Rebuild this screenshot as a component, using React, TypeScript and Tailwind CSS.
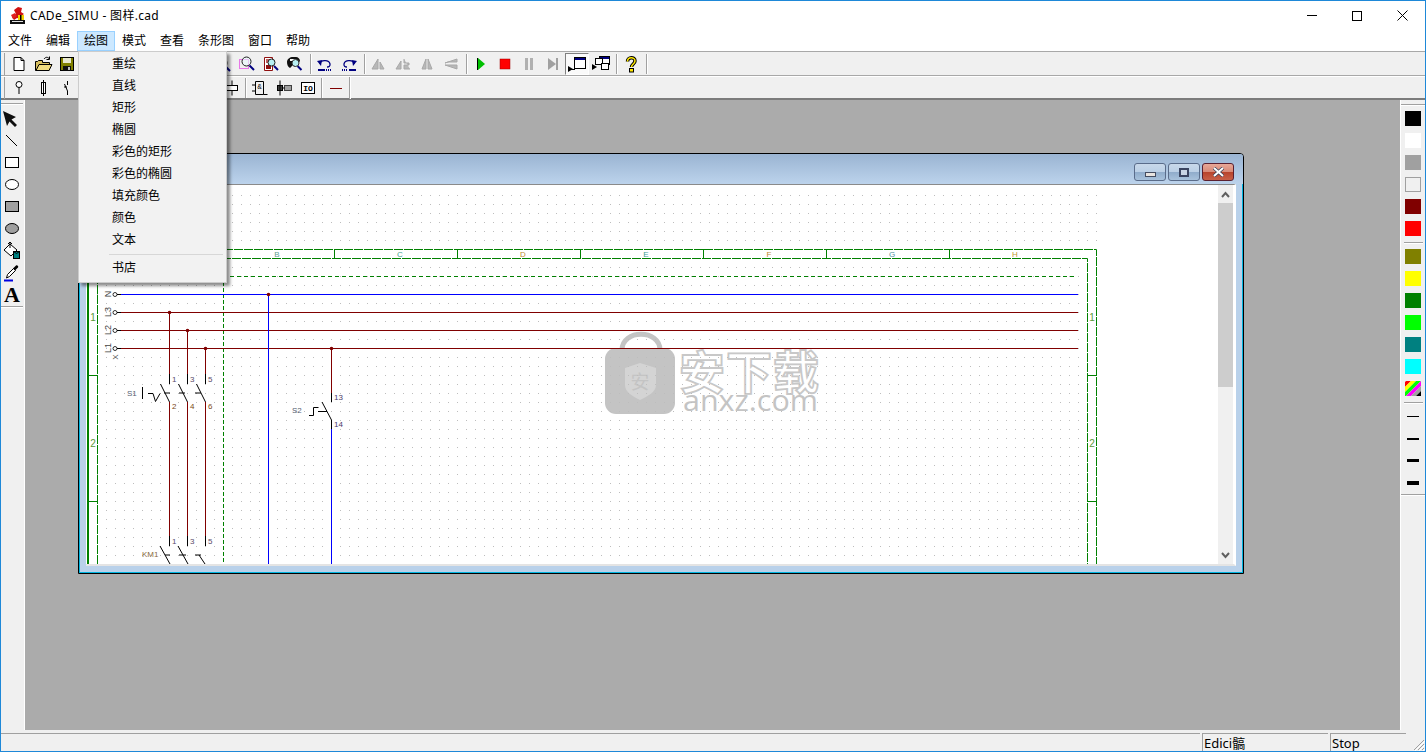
import React from 'react';

const menus = ['文件', '编辑', '绘图', '模式', '查看', '条形图', '窗口', '帮助'];
const drawItems = ['重绘', '直线', '矩形', '椭圆', '彩色的矩形', '彩色的椭圆', '填充颜色', '颜色', '文本'];
const colorsA = ['bg-black', 'bg-white', 'bg-[#a0a0a0]', 'bg-[#f0f0f0] border border-[#a0a0a0]', 'bg-[#800000]', 'bg-[#ff0000]'];
const colorsB = ['bg-[#808000]', 'bg-[#ffff00]', 'bg-[#008000]', 'bg-[#00ff00]', 'bg-[#008080]', 'bg-[#00ffff]'];
const stripes = ['#ff0000', '#ffff00', '#00ff00', '#ff00ff', '#a0a0a0', '#000000'];
const colLabels = [
  { t: 'B', x: 277, c: '#5f9f8f' },
  { t: 'C', x: 400, c: '#3f9f8f' },
  { t: 'D', x: 523, c: '#c08a30' },
  { t: 'E', x: 646, c: '#3f9f8f' },
  { t: 'F', x: 769, c: '#c08a30' },
  { t: 'G', x: 892, c: '#4f8f9f' },
  { t: 'H', x: 1015, c: '#c09a30' },
];

const Ico = ({ children }: { children: React.ReactNode }) => (
  <svg width="20" height="18" viewBox="0 0 20 18" className="block">
    {children}
  </svg>
);

const Btn = ({ children, pressed }: { children: React.ReactNode; pressed?: boolean }) => (
  <div className={`w-6 h-[22px] flex items-center justify-center ${pressed ? 'bg-[#fafafa] border border-t-[#808080] border-l-[#808080] border-r-white border-b-white' : ''}`}>
    {children}
  </div>
);

const Sep = ({ tight }: { tight?: boolean }) => (
  <div className={`${tight ? 'mx-px' : 'ml-[3px] mr-px'} w-[2px] h-[20px] border-l border-[#a0a0a0] bg-white`} />
);

const Grip = () => <div className="ml-[3px] mr-[2px] w-[1px] h-[22px] bg-[#a0a0a0]" />;

// magnifier used by the zoom buttons
const Lens = () => (
  <g>
    <line x1="12.5" y1="11.5" x2="17" y2="16" stroke="#000080" strokeWidth="2" />
    <circle cx="9.5" cy="8" r="4.5" fill="#c8f4f8" stroke="#202020" />
  </g>
);

const GrayFlip = ({ d }: { d: string }) => (
  <Btn>
    <Ico>
      <path d={d} fill="#b8b8b8" stroke="#a8a8a8" />
    </Ico>
  </Btn>
);

const ToolbarOne = () => (
  <div className="h-6 flex items-center bg-[#f0f0f0] border-b border-[#a8a8a8]">
    <Grip />
    <Btn>
      <Ico><path d="M5 2.5h7l3 3v10H5z M12 2.5v3h3" fill="#fff" stroke="#000" /></Ico>
    </Btn>
    <Btn>
      <Ico>
        <path d="M2.5 15.5v-9h2l1-1h4v2h7v7.500z" fill="#d8c060" stroke="#000" />
        <path d="M3 15.500l3-6h13l-3 6z" fill="#f0dc80" stroke="#000" />
        <path d="M11 4c2-2.500 4-2 5.500 0M16.500 1.500v3h-3" fill="none" stroke="#000" />
      </Ico>
    </Btn>
    <Btn>
      <Ico>
        <rect x="3.500" y="2.500" width="13" height="13" fill="#808000" stroke="#000" />
        <rect x="6" y="3" width="8" height="5" fill="#e8e8d0" />
        <rect x="6" y="11" width="8" height="4.500" fill="#101010" />
        <rect x="11" y="12" width="2" height="3" fill="#c0c0c0" />
      </Ico>
    </Btn>
    <div className="w-[132px]" />
    <Btn><Ico><Lens /></Ico></Btn>
    <Btn>
      <Ico>
        <rect x="2.500" y="4.500" width="9" height="9" fill="none" stroke="#e000e0" strokeDasharray="1 1" />
        <line x1="12.500" y1="10.500" x2="17" y2="15" stroke="#000080" strokeWidth="2" />
        <circle cx="9.500" cy="6.500" r="4.500" fill="#e8fbfc" fillOpacity="0.6" stroke="#202020" />
      </Ico>
    </Btn>
    <Btn>
      <Ico>
        <path d="M3.500 2.500h8v13h-8z" fill="#fff" stroke="#901010" />
        <rect x="5" y="4" width="5" height="4" fill="#c06060" />
        <rect x="5" y="10" width="5" height="4" fill="#901010" />
        <line x1="13" y1="11" x2="17" y2="15" stroke="#000080" strokeWidth="2" />
        <circle cx="10.500" cy="7.500" r="3.500" fill="#b8f0f4" stroke="#202020" />
      </Ico>
    </Btn>
    <Btn>
      <Ico>
        <path d="M2 7c0-3 3-5 6-5h3c2 0 4 2 4 4l-5 6-2-2-3 3c-2-1-3-3-3-6z" fill="#101010" />
        <rect x="5" y="4" width="6" height="2" fill="#fff" />
        <line x1="12.500" y1="11" x2="16.500" y2="15" stroke="#000080" strokeWidth="2" />
        <circle cx="10.500" cy="8" r="3.500" fill="#b8f0f4" stroke="#303030" />
      </Ico>
    </Btn>
    <Sep />
    <Btn>
      <Ico>
        <path d="M5 9c0-4 9-5 10 0 .4 2-1 3-3 3" fill="none" stroke="#000080" strokeWidth="1.300" />
        <path d="M2 6l5-1-1 6z" fill="#000080" />
        <path d="M3 15h7" stroke="#000080" strokeWidth="2" />
        <path d="M11 15h6" stroke="#000080" strokeWidth="2" strokeDasharray="1 1" />
      </Ico>
    </Btn>
    <Btn>
      <Ico>
        <path d="M15 9c0-4-9-5-10 0-.4 2 1 3 3 3" fill="none" stroke="#000080" strokeWidth="1.300" />
        <path d="M18 6l-5-1 1 6z" fill="#000080" />
        <path d="M3 15h6" stroke="#000080" strokeWidth="2" strokeDasharray="1 1" />
        <path d="M10 15h7" stroke="#000080" strokeWidth="2" />
      </Ico>
    </Btn>
    <Sep />
    <GrayFlip d="M9 4v10H3zM11 7l4 7h-4z" />
    <GrayFlip d="M8 6v8H3zM11 4v4h5v2h-5v4h6" />
    <GrayFlip d="M9 4v10H5zM11 4v10h4z" />
    <GrayFlip d="M4 8l12-4v3H7zM4 10h12v4z" />
    <Sep />
    <Btn>
      <Ico>
        <rect x="6" y="3" width="1" height="12" fill="#000" />
        <path d="M7 3l7 6-7 6z" fill="#00c000" />
      </Ico>
    </Btn>
    <Btn><Ico><rect x="5" y="4" width="10" height="10" fill="#ff0000" stroke="#a00000" strokeWidth="0.500" /></Ico></Btn>
    <Btn>
      <Ico>
        <rect x="6" y="3" width="3" height="12" fill="#b0b0b0" />
        <rect x="11" y="3" width="3" height="12" fill="#b0b0b0" />
      </Ico>
    </Btn>
    <Btn>
      <Ico>
        <path d="M5 3l8 6-8 6z" fill="#a0a0a0" />
        <rect x="13" y="3" width="2" height="12" fill="#a0a0a0" />
      </Ico>
    </Btn>
    <Btn pressed>
      <Ico>
        <rect x="7.500" y="2.500" width="11" height="11" fill="#fff" stroke="#000" />
        <rect x="8" y="3" width="10" height="2" fill="#000080" />
        <path d="M1 11l5 3-5 3z" fill="#000" />
        <path d="M2 14.500h6" stroke="#000" />
      </Ico>
    </Btn>
    <Btn>
      <Ico>
        <rect x="8.500" y="1.500" width="10" height="8" fill="#fff" stroke="#000" />
        <rect x="9" y="2" width="9" height="2" fill="#000080" />
        <rect x="4.500" y="3.500" width="7" height="6" fill="#fff" stroke="#000" />
        <rect x="10.500" y="8.500" width="7" height="6" fill="#fff" stroke="#000" />
        <path d="M1 9l5 3-5 3z" fill="#000" />
      </Ico>
    </Btn>
    <Sep />
    <Btn>
      <Ico>
        <path d="M6.500 6.500c0-5 7.500-5 7.500-.5 0 3-3.500 3-3.500 6" fill="none" stroke="#000" strokeWidth="3.500" />
        <path d="M6.500 6.500c0-5 7.500-5 7.500-.5 0 3-3.500 3-3.500 6" fill="none" stroke="#ffe800" strokeWidth="1.500" />
        <rect x="8.500" y="13.500" width="4" height="3.500" fill="#ffe800" stroke="#000" />
      </Ico>
    </Btn>
    <Sep />
  </div>
);

const ToolbarTwo = () => (
  <div className="h-6 flex items-center bg-[#f0f0f0] border-t border-white border-b-2 border-b-[#7c7c7c]">
    <Grip />
    <Btn>
      <Ico>
        <circle cx="10" cy="5.500" r="3" fill="#fff" stroke="#000" />
        <line x1="10" y1="8.500" x2="10" y2="15" stroke="#000" />
      </Ico>
    </Btn>
    <Btn>
      <Ico>
        <rect x="8.500" y="3.500" width="4" height="11" fill="#fff" stroke="#000" />
        <line x1="10.500" y1="1" x2="10.500" y2="17" stroke="#000" />
      </Ico>
    </Btn>
    <Btn>
      <Ico>
        <path d="M10.500 2v4M7.500 5l3 7M10.500 12v4M7 8h3" fill="none" stroke="#000" />
      </Ico>
    </Btn>
    <div className="w-[141px]" />
    <Btn>
      <Ico>
        <rect x="4.500" y="6.500" width="11" height="5" fill="#fff" stroke="#000" />
        <path d="M10 1.500v5M10 11.500v5" stroke="#000" />
      </Ico>
    </Btn>
    <Sep tight />
    <Btn>
      <Ico>
        <path d="M5.500 2.500h8v13h-8zM2 6h3.500M2 12h3.500M13.500 15.500h4" fill="none" stroke="#000" />
        <text x="9.500" y="10" fontSize="7" textAnchor="middle" fontFamily="'Liberation Mono', monospace" fill="#000">&amp;</text>
      </Ico>
    </Btn>
    <Btn>
      <Ico>
        <rect x="3.500" y="6.500" width="5" height="5" fill="#404040" stroke="#000" />
        <rect x="10.500" y="6.500" width="7" height="5" fill="#a0a0a0" stroke="#404040" />
        <path d="M6 1.500v15M8.500 9h2" stroke="#000" />
      </Ico>
    </Btn>
    <Btn>
      <Ico>
        <rect x="3.500" y="3.500" width="13" height="11" fill="#fff" stroke="#000" />
        <text x="10" y="12" fontSize="8" fontWeight="bold" textAnchor="middle" fontFamily="'Liberation Mono', monospace" fill="#000">IO</text>
      </Ico>
    </Btn>
    <Sep tight />
    <Btn>
      <Ico><line x1="4" y1="9.500" x2="16" y2="9.500" stroke="#800000" /></Ico>
    </Btn>
    <div className="ml-px w-[2px] h-[22px] border-l border-[#a0a0a0] bg-white" />
  </div>
);

const LeftTools = () => (
  <aside className="w-6 bg-[#f0f0f0] border-r border-white flex flex-col pr-[1px]">
    <div className="mt-[3px] h-[2px] border-t border-[#a0a0a0] bg-white" />
    <div className="h-[3px]" />
    {[
      <path d="M1 1l13 6-4.500 2.500 5.500 5.500-2 2-5.500-5.500-2.500 4.500z" fill="#101010" />,
      <line x1="4" y1="3" x2="15" y2="14" stroke="#000" />,
      <rect x="3.500" y="3.500" width="13" height="10" fill="#fff" stroke="#000" />,
      <ellipse cx="10" cy="8.500" rx="6.500" ry="5" fill="#fff" stroke="#000" />,
      <rect x="3.500" y="3.500" width="13" height="10" fill="#a0a0a0" stroke="#000" />,
      <ellipse cx="10" cy="8.500" rx="6.500" ry="5" fill="#a0a0a0" stroke="#000" />,
      <g>
        <path d="M2 8l6-6 7 6-6 6z" fill="#fff" stroke="#000" />
        <path d="M8 0v6M6 2l2-2 2 2" fill="none" stroke="#000" />
        <rect x="11.500" y="9.500" width="6" height="7" fill="#008080" stroke="#000" />
        <path d="M11.500 9.500l3 2 3-2" fill="none" stroke="#000" />
      </g>,
      <g>
        <path d="M5.500 10.500l6-6 2 2-6 6-3 1.500z" fill="#fff" stroke="#000" />
        <path d="M11 4.500l3-3c1-1 3 1 2 2l-3 3z" fill="#000" />
        <path d="M2 16.500h9" stroke="#0000e0" strokeWidth="2" />
      </g>,
    ].map((icon, i) => (
      <div key={i} className="h-[22px] flex items-center justify-center">
        <svg width="20" height="18" viewBox="0 0 20 18">{icon}</svg>
      </div>
    ))}
    <div className="h-[22px] flex items-center justify-center text-[22px] font-bold leading-none text-black font-['Liberation_Serif',serif]">A</div>
    <div className="h-[2px] border-t border-[#a0a0a0] bg-white" />
  </aside>
);

const Palette = () => (
  <aside className="w-[25px] bg-[#f0f0f0] border-l border-white flex flex-col items-center">
    <div className="w-full mt-[4px] h-[2px] border-t border-[#a0a0a0] bg-white" />
    <div className="h-[5px]" />
    <div className="flex flex-col gap-[7px]">
      {colorsA.map((c, i) => <div key={i} className={`w-4 h-[15px] ${c}`} />)}
    </div>
    <div className="w-[19px] mt-[6px] mb-[5px] h-[2px] border-t border-[#a0a0a0] bg-white" />
    <div className="flex flex-col gap-[7px]">
      {colorsB.map((c, i) => <div key={i} className={`w-4 h-[15px] ${c}`} />)}
      <svg width="16" height="15" viewBox="0 0 16 15" className="block">
        <rect width="16" height="15" fill="#fff" />
        {stripes.map((fill, i) => {
          const a = i * 5 + 1;
          const b = i === 5 ? 40 : a + 5;
          return <path key={fill} d={`M${a} 0L${b} 0L0 ${b}L0 ${a}z`} fill={fill} />;
        })}
      </svg>
    </div>
    <div className="w-[19px] mt-[6px] mb-[5px] h-[2px] border-t border-[#a0a0a0] bg-white" />
    <div className="flex flex-col gap-[7px]">
      {['h-px', 'h-[2px]', 'h-[3px]', 'h-1'].map((h, i) => (
        <div key={i} className="w-4 h-[15px] flex items-center justify-center">
          <div className={`w-3 bg-black ${h}`} />
        </div>
      ))}
    </div>
    <div className="w-full mt-[4px] h-[2px] border-t border-[#a0a0a0] bg-white" />
  </aside>
);

const Contact = ({ x, y, x0 }: { x: number; y: number; x0: number }) => (
  <path d={`M${x} ${y - 10}v10M${x - 9} ${y}L${x} ${y + 18}M${x0} ${y + 9}h6`} fill="none" stroke="#000" />
);

const Schematic = () => {
  const t = { fontFamily: "'Liberation Sans', sans-serif", fontSize: 8 };
  return (
    <svg width="1132" height="379" viewBox="86 185 1132 379" className="block shrink-0">
      <defs>
        <pattern id="dots" x="7" y="6" width="9" height="9" patternUnits="userSpaceOnUse">
          <rect width="1" height="1" fill="#bdbdbd" />
        </pattern>
      </defs>

      {/* watermark */}
      <g>
        <path d="M622 350c0-21 38-21 38 0" fill="none" stroke="#c4c4c4" strokeWidth="5" />
        <rect x="605" y="348" width="70" height="66" rx="11" fill="#c4c4c4" />
        <path d="M625 368l15-5 16 5v17c0 7-8 11-16 15-8-4-15-8-15-15z" fill="#d4d4d4" />
        <text x="640" y="389" fontSize="19" textAnchor="middle" fontFamily="'Noto Sans CJK SC', sans-serif" fill="#c4c4c4">安</text>
        <text x="679" y="389" fontSize="46" fontWeight="bold" fontFamily="'Noto Sans CJK SC', sans-serif" fill="#fff" stroke="#c8c8c8" strokeWidth="1.800" textLength="140">安下载</text>
        <text x="683" y="411" fontSize="30" fontFamily="'Open Sans', sans-serif" fill="#c4c4c4" textLength="135" lengthAdjust="spacingAndGlyphs">anxz.com</text>
      </g>

      <rect x="97" y="190" width="1000" height="59" fill="url(#dots)" />
      <rect x="97" y="259" width="984" height="306" fill="url(#dots)" />

      {/* sheet frame */}
      <g fill="none" stroke="#008000">
        <path d="M88.500 564V249.500H1096.500V564" strokeDasharray="9 1" />
        <path d="M88 249v316" strokeWidth="2" />
        <path d="M97.500 564V258.500H1087.500V564" strokeDasharray="9 1" />
        <path d="M97 276.500H1076" strokeDasharray="4 3" />
        <path d="M223.500 276V562" strokeDasharray="4 2" />
        {[334, 457, 580, 703, 826, 949].map(x => <path key={x} d={`M${x + 0.5} 249v9`} />)}
        {[375, 501].map(y => (
          <g key={y}>
            <path d={`M88 ${y + 0.5}h9`} />
            <path d={`M1087 ${y + 0.5}h9`} />
          </g>
        ))}
      </g>
      {colLabels.map(l => (
        <text key={l.t} x={l.x} y={257} textAnchor="middle" {...t} fill={l.c}>{l.t}</text>
      ))}
      {[[93, 321, '1'], [93, 447, '2'], [1092, 321, '1'], [1092, 447, '2']].map(([x, y, s], i) => (
        <text key={i} x={x} y={y} textAnchor="middle" fontFamily="'Liberation Sans', sans-serif" fontSize="10" fill="#5a9a3a">{s}</text>
      ))}

      {/* bus bars */}
      <g fill="none" strokeWidth="1">
        <path d="M120 294.500H1078" stroke="#0000ff" />
        {[312, 330, 348].map(y => <path key={y} d={`M120 ${y + 0.5}H1078`} stroke="#800000" />)}
        <path d="M268.500 294V564" stroke="#0000ff" />
        <path d="M169.500 312V374M187.500 330V374M205.500 348V374" stroke="#800000" />
        <path d="M169.500 402V536M187.500 402V536M205.500 402V536" stroke="#800000" />
        <path d="M331.500 348V393" stroke="#800000" />
        <path d="M331.500 428V564" stroke="#0000ff" />
      </g>
      {[294, 312, 330, 348].map(y => (
        <g key={y}>
          <circle cx="115" cy={y + 0.5} r="2" fill="#fff" stroke="#000" strokeWidth="0.800" />
          <path d={`M117 ${y + 0.5}h4`} stroke="#000" />
        </g>
      ))}
      {[[268, 294], [169, 312], [187, 330], [205, 348], [331, 348]].map(([x, y]) => (
        <circle key={`${x}-${y}`} cx={x + 0.5} cy={y + 0.5} r="1.800" fill="#800000" />
      ))}
      {[['N', 294], ['L3', 312], ['L2', 330], ['L1', 348]].map(([s, y]) => (
        <text key={s} x={0} y={0} textAnchor="middle" transform={`translate(111 ${y}) rotate(-90)`} fontFamily="'Liberation Sans', sans-serif" fontSize="9" fill="#444">{s}</text>
      ))}
      <text x={0} y={0} textAnchor="middle" transform="translate(118 357) rotate(-90)" {...t} fill="#555">X</text>

      {/* S1 */}
      <Contact x={169.5} y={384} x0={164} />
      <Contact x={187.5} y={384} x0={179} />
      <Contact x={205.5} y={384} x0={195} />
      <path d="M142.500 387v12M148 393.500h5l2.500 8 4.500-8" fill="none" stroke="#000" />
      <text x="127" y="396" {...t} fill="#556070">S1</text>
      {[['1', 172, 382], ['3', 190, 382], ['5', 208, 382]].map(([s, x, y]) => (
        <text key={`a${s}`} x={x} y={y} {...t} fill="#5a4a6a">{s}</text>
      ))}
      {[['2', 172, 409], ['4', 190, 409], ['6', 208, 409]].map(([s, x, y]) => (
        <text key={`b${s}`} x={x} y={y} {...t} fill="#7a4a20">{s}</text>
      ))}

      {/* S2 */}
      <path d="M331.500 393v9M322 402l9.500 18v9M309 415.500h4.500v-8h5M318 411.500h9" fill="none" stroke="#000" />
      <text x="292" y="413" {...t} fill="#556070">S2</text>
      <text x="334" y="400" {...t} fill="#4a3a6a">13</text>
      <text x="334" y="427" {...t} fill="#4a3a6a">14</text>

      {/* KM1 */}
      <path d="M169.500 536v10M187.500 536v10M205.500 536v10" stroke="#000" />
      <path d="M160 546l10 18M165 555h5M178 546l10 18M179 555h7M195 555h6M199 555l6 9" fill="none" stroke="#000" />
      <text x="142" y="557" {...t} fill="#8a6a40">KM1</text>
      {[['1', 172], ['3', 190], ['5', 208]].map(([s, x]) => (
        <text key={`c${s}`} x={x} y={544} {...t} fill="#5a4a6a">{s}</text>
      ))}
    </svg>
  );
};

const CaptionBtn = ({ close, children }: { close?: boolean; children: React.ReactNode }) => (
  <div className={`w-8 h-[18px] rounded-[3px] border flex items-center justify-center ${close
    ? 'border-[#5a2030] bg-[linear-gradient(180deg,#e8a898_0%,#d88a78_48%,#b8442c_52%,#c86048_100%)]'
    : 'border-[#5a6c8a] bg-[linear-gradient(180deg,#c8d8ea_0%,#bcd0e6_48%,#90accb_52%,#a8c2dc_100%)]'}`}>
    {children}
  </div>
);

const ChildWindow = () => (
  <section className="absolute left-[53px] top-[53px] w-[1166px] h-[421px] flex flex-col rounded-t-[4px] border border-black bg-[#b9d1ea]">
    <div className="h-[30px] shrink-0 flex items-start justify-end gap-[2px] pt-[9px] pr-[9px] rounded-t-[3px] bg-[linear-gradient(180deg,#9ab4d2,#bcd3ec)]">
      <CaptionBtn>
        <div className="mt-[4px] w-[11px] h-[5px] bg-[#e8e4e0] border border-[#444c60]" />
      </CaptionBtn>
      <CaptionBtn>
        <div className="w-[10px] h-[9px] bg-[#c8d4e4] border-2 border-[#3a4460]" />
      </CaptionBtn>
      <CaptionBtn close>
        <svg width="13" height="10" viewBox="0 0 13 10">
          <path d="M2 1l9 8M11 1l-9 8" stroke="#39435a" strokeWidth="3.500" />
          <path d="M2 1l9 8M11 1l-9 8" stroke="#fff" strokeWidth="2" />
        </svg>
      </CaptionBtn>
    </div>
    <div className="flex-1 min-h-0 flex flex-col px-[6px] pb-[6px] border border-t-0 border-[#00b4e0]">
      <div className="h-[382px] flex border-t border-[#8a8a8a] border-r-2 border-b-2 border-r-white border-b-[#e4e4e4] bg-white overflow-hidden">
        <Schematic />
        <div className="w-[15px] shrink-0 bg-[#f0f0f0] flex flex-col">
          <div className="h-[18px] flex items-center justify-center">
            <svg width="9" height="7" viewBox="0 0 9 7"><path d="M1 6l3.500-4L8 6" fill="none" stroke="#606060" strokeWidth="2" /></svg>
          </div>
          <div className="h-[184px] bg-[#cdcdcd]" />
          <div className="flex-1" />
          <div className="h-[17px] flex items-center justify-center">
            <svg width="9" height="7" viewBox="0 0 9 7"><path d="M1 1l3.500 4L8 1" fill="none" stroke="#606060" strokeWidth="2" /></svg>
          </div>
        </div>
        <div className="w-px bg-white" />
      </div>
    </div>
  </section>
);

const DrawMenu = () => (
  <div className="absolute left-[77px] top-[50px] w-[149px] h-[232px] bg-[#f2f2f2] border border-[#cccccc] shadow-[3px_3px_3px_rgba(0,0,0,0.45)] py-px text-[12px] text-black">
    {drawItems.map(item => (
      <div key={item} className="h-[22px] flex items-center pl-[33px]">{item}</div>
    ))}
    <div className="mt-[3px] mb-[2px] ml-[30px] mr-[3px] h-px bg-[#d7d7d7]" />
    <div className="h-[22px] flex items-center pl-[33px]">书店</div>
  </div>
);

export default function App() {
  return (
    <div className="relative w-[1426px] h-[752px] overflow-hidden flex flex-col border border-[#1e88d8] bg-[#f0f0f0] text-black font-['Noto_Sans','Noto_Sans_CJK_SC',sans-serif]">
      {/* title bar */}
      <header className="h-[29px] shrink-0 bg-white flex items-center">
        <svg width="17" height="18" viewBox="0 0 17 18" className="ml-[8px] mr-[4px] shrink-0">
          <path d="M9 0l4 1-1 4 3 2-3 2v3l-4-1-3 2-2-3 4-3-2-4z" fill="#d01010" />
          <path d="M2 8l4-2 2 3-4 3z" fill="#e02020" />
          <rect x="9" y="8" width="6" height="5" fill="#f0d000" />
          <rect x="11" y="8" width="1.500" height="5" fill="#000" />
          <rect x="1" y="13" width="15" height="4" fill="#101010" />
          <rect x="3" y="14" width="11" height="1" fill="#e0e0e0" />
        </svg>
        <span className="text-[12px] tracking-[0.3px]">CADe_SIMU - 图样.cad</span>
        <div className="ml-auto flex items-center h-full text-black">
          <div className="w-[45px] flex justify-center"><div className="w-[10px] h-px bg-black mt-[-1px]" /></div>
          <div className="w-[46px] flex justify-center"><div className="w-[10px] h-[10px] border border-black" /></div>
          <div className="w-[45px] flex justify-center">
            <svg width="11" height="11" viewBox="0 0 11 11"><path d="M.5.5l10 10M10.500.5l-10 10" stroke="#000" /></svg>
          </div>
        </div>
      </header>

      {/* menu bar */}
      <nav className="h-[22px] shrink-0 bg-white border-b border-[#a8a8a8] flex items-start text-[12px]">
        {menus.map(m => (
          <div key={m} className={`h-5 mt-px flex items-center px-[6px] border ${m === '绘图' ? 'bg-[#cce8ff] border-[#99d1ff]' : 'border-transparent'}`}>
            {m}
          </div>
        ))}
      </nav>

      <ToolbarOne />
      <ToolbarTwo />

      {/* workspace */}
      <main className="flex-1 min-h-0 flex">
        <LeftTools />
        <div className="relative flex-1 bg-[#ababab]">
          <ChildWindow />
        </div>
        <Palette />
      </main>

      {/* status bar */}
      <footer className="mt-[3px] h-[18px] shrink-0 flex items-stretch text-[13px] leading-none">
        <div className="w-[1199px] border-t border-[#a0a0a0]" />
        <div className="ml-[2px] w-[126px] border-t border-l border-[#a0a0a0] flex items-center pl-px pt-px">Edici髇</div>
        <div className="ml-[2px] w-[76px] border-t border-l border-[#a0a0a0] flex items-center pl-px pt-px">Stop</div>
        <div className="flex-1 flex items-end justify-end">
          <svg width="13" height="13" viewBox="0 0 13 13">
            <path d="M12 2L2 12M12 6l-6 6M12 10l-2 2" stroke="#a0a0a0" fill="none" />
            <path d="M13 3L3 13M13 7l-6 6M13 11l-2 2" stroke="#fff" fill="none" />
          </svg>
        </div>
      </footer>

      <DrawMenu />
    </div>
  );
}
